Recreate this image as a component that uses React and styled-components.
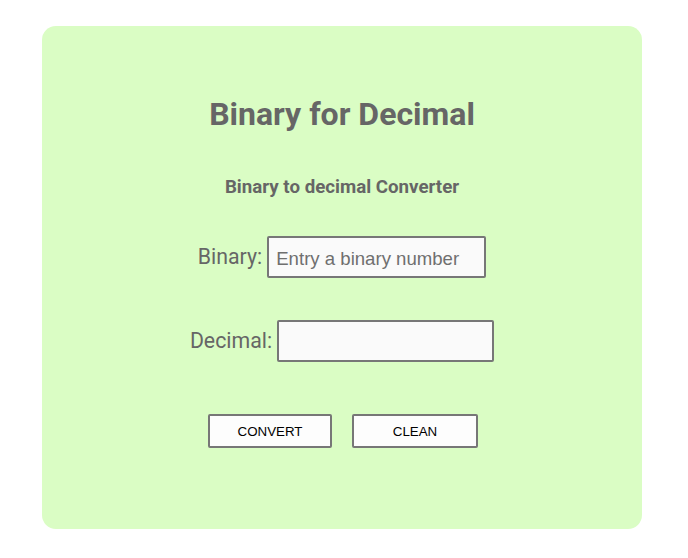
import styled, { createGlobalStyle } from "styled-components";

const GlobalStyle = createGlobalStyle`
	body {
		margin: 0;
		background: #ffffff;
		font-family: Roboto, "Liberation Sans", sans-serif;
	}
`;

const Card = styled.section`
	box-sizing: border-box;
	width: 600px;
	height: 503px;
	margin: 26px 0 0 42px;
	padding-top: 69px;
	background: #dafdc4;
	border-radius: 14px;
	display: flex;
	flex-direction: column;
	align-items: center;
	color: #666666;
`;

const Title = styled.h1`
	margin: 0;
	font-size: 32px;
	line-height: 38px;
	font-weight: 700;
`;

const Subtitle = styled.h3`
	margin: 43px 0 0;
	font-size: 18.72px;
	line-height: 22px;
	font-weight: 700;
`;

const Field = styled.div`
	display: flex;
	align-items: center;
	gap: 5px;
	margin-top: ${(props) => props.top};

	label {
		font-size: 21.3px;
		color: #666666;
		margin-top: -2px;
	}
`;

const Input = styled.input`
	box-sizing: border-box;
	width: ${(props) => props.width};
	height: 42px;
	padding: 3px 7px 0;
	border: 2px solid #777777;
	border-radius: 2px;
	background: #fafafa;
	font-family: "Liberation Sans", Arial, sans-serif;
	font-size: 18.6px;
	color: #333333;
	outline: none;

	&::placeholder {
		color: #6f6f6f;
	}
`;

const Actions = styled.div`
	display: flex;
	gap: 20px;
	margin-top: 52px;
	transform: translateX(1px);
`;

const Button = styled.button`
	box-sizing: border-box;
	width: ${(props) => props.width};
	height: 34px;
	border: 2px solid #777777;
	border-radius: 2px;
	background: #fdfdfd;
	font-family: "Liberation Sans", Arial, sans-serif;
	font-size: 13.33px;
	color: #000000;
	cursor: pointer;
`;

const App = () => {
	return (
		<>
			<GlobalStyle />
			<Card>
				<Title>Binary for Decimal</Title>
				<Subtitle>Binary to decimal Converter</Subtitle>

				<Field top="38px">
					<label htmlFor="binary">Binary:</label>
					<Input id="binary" width="219px" placeholder="Entry a binary number" />
				</Field>

				<Field top="42px">
					<label htmlFor="decimal">Decimal:</label>
					<Input id="decimal" width="217px" readOnly />
				</Field>

				<Actions>
					<Button width="124px">CONVERT</Button>
					<Button width="126px">CLEAN</Button>
				</Actions>
			</Card>
		</>
	);
};

export default App;
